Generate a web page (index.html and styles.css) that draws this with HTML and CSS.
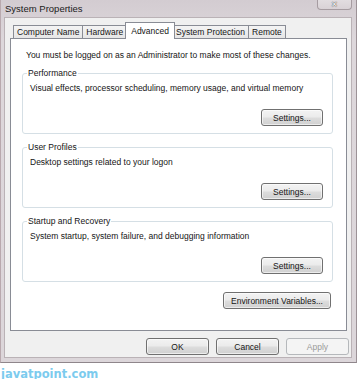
FILE: index.html
```html
<!DOCTYPE html>
<html lang="en">
<head>
	<meta charset="UTF-8">
	<title>System Properties</title>
	<link rel="stylesheet" href="styles.css">
</head>
<body>
	<div class="window">
		<div class="titlebar">
			<span class="title">System Properties</span>
			<span class="close-btn">✕</span>
		</div>
		<div class="client">
			<div class="tabs">
				<div class="tab">Computer Name</div>
				<div class="tab">Hardware</div>
				<div class="tab active">Advanced</div>
				<div class="tab">System Protection</div>
				<div class="tab">Remote</div>
			</div>
			<div class="panel">
				<p class="note">You must be logged on as an Administrator to make most of these changes.</p>
				<div class="groups">
					<fieldset class="group">
						<legend>Performance</legend>
						<p class="group-text">Visual effects, processor scheduling, memory usage, and virtual memory</p>
						<div class="group-actions">
							<button class="btn">Settings...</button>
						</div>
					</fieldset>
					<fieldset class="group">
						<legend>User Profiles</legend>
						<p class="group-text">Desktop settings related to your logon</p>
						<div class="group-actions">
							<button class="btn">Settings...</button>
						</div>
					</fieldset>
					<fieldset class="group">
						<legend>Startup and Recovery</legend>
						<p class="group-text">System startup, system failure, and debugging information</p>
						<div class="group-actions">
							<button class="btn">Settings...</button>
						</div>
					</fieldset>
				</div>
				<div class="panel-actions">
					<button class="btn btn-wide">Environment Variables...</button>
				</div>
			</div>
			<div class="dialog-actions">
				<button class="btn">OK</button>
				<button class="btn">Cancel</button>
				<button class="btn" disabled>Apply</button>
			</div>
		</div>
	</div>
	<div class="watermark">javatpoint.com</div>
</body>
</html>
```

FILE: styles.css
```css
body {
	margin: 0;
	background-color: #ffffff;
	font-family: "Liberation Sans", Arial, sans-serif;
	font-size: 8.5px;
	color: #151515;
	width: 359px;
	height: 379px;
	overflow: hidden;
}
.window {
	width: 357px;
	height: 363px;
	box-sizing: border-box;
	background: linear-gradient(#d3ccd1, #ddd7db 40px, #dcd6da);
	border-left: 1px solid #b9a9ae;
	border-right: 1px solid #9c9297;
	border-bottom: 1px solid #8f868b;
	display: flex;
	flex-direction: column;
}
.titlebar {
	height: 17px;
	display: flex;
	align-items: flex-start;
}
.title {
	font-size: 9.5px;
	color: #1b1b1b;
	margin: 3px 0 0 4px;
}
.close-btn {
	margin-left: auto;
	margin-right: 4px;
	width: 35px;
	height: 10px;
	box-sizing: border-box;
	border: 1px solid #a69ca1;
	border-top: none;
	border-radius: 0 0 4px 4px;
	background: linear-gradient(#e2dde0, #d9d2d6);
	color: #f7f4f5;
	font-size: 8px;
	line-height: 9px;
	text-align: center;
	text-shadow: 0 0 1px #4a4a4a, 0 0 1px #4a4a4a;
}
.client {
	margin-left: 3px;
	width: 348px;
	height: 341px;
	box-sizing: border-box;
	background-color: #f0f0f0;
	border: 1px solid #bab2b6;
	padding: 4px 0 0 5px;
}
.tabs {
	display: flex;
	height: 16px;
	padding-left: 3px;
	position: relative;
	z-index: 1;
}
.tab {
	margin-top: 3px;
	height: 13px;
	box-sizing: border-box;
	padding: 0 3px;
	border: 1px solid #898c95;
	border-bottom: none;
	border-left: none;
	background: linear-gradient(#f4f4f4, #e6e6e6);
	line-height: 12px;
	white-space: nowrap;
}
.tab:first-child { border-left: 1px solid #898c95; }
.tab.active {
	margin-top: 0;
	height: 17px;
	margin-left: -2px;
	margin-right: -2px;
	padding: 0 5px;
	border-left: 1px solid #898c95;
	background: #ffffff;
	line-height: 16px;
	position: relative;
	z-index: 2;
}
.tab.active + .tab { border-left: none; }
.panel {
	width: 337px;
	height: 293px;
	box-sizing: border-box;
	background-color: #ffffff;
	border: 1px solid #898c95;
	padding: 10px 0 0 0;
}
.note {
	margin: 0 0 0 15px;
	line-height: 12px;
}
.groups {
	display: flex;
	flex-direction: column;
	gap: 7px;
	margin-top: 6px;
}
.group {
	margin: 0 0 0 11px;
	width: 311px;
	height: 67px;
	box-sizing: border-box;
	border: 1px solid #d5dfe5;
	border-radius: 3px;
	padding: 0 9px 0 4px;
	display: flex;
	flex-direction: column;
}
.group legend {
	padding: 0 1px;
	line-height: 12px;
}
.group-text {
	margin: 3px 0 0 3px;
	line-height: 12px;
}
.group-actions {
	display: flex;
	justify-content: flex-end;
	margin-top: 15px;
}
.btn {
	font-family: inherit;
	font-size: 8.5px;
	color: #151515;
	width: 62px;
	height: 17px;
	padding: 0;
	box-sizing: border-box;
	border: 1px solid #707070;
	border-radius: 3px;
	background: linear-gradient(#f3f3f3 0%, #ebebeb 48%, #dddddd 52%, #d0d0d0 100%);
	box-shadow: inset 0 0 0 1px rgba(255, 255, 255, 0.6);
}
.btn:disabled {
	color: #9a9a9a;
	border-color: #b5b8bb;
	background: #f4f4f4;
	box-shadow: none;
}
.btn-wide { width: 108px; }
.panel-actions {
	display: flex;
	justify-content: flex-end;
	margin: 10px 15px 0 0;
}
.dialog-actions {
	display: flex;
	justify-content: flex-end;
	gap: 7px;
	margin-top: 7px;
	padding-right: 2px;
}
.dialog-actions .btn { width: 63px; }
.watermark {
	margin-top: 4px;
	margin-left: 1px;
	font-family: "DejaVu Sans", sans-serif;
	font-weight: bold;
	font-size: 11.5px;
	line-height: 14px;
	color: #7ccbee;
}
```
